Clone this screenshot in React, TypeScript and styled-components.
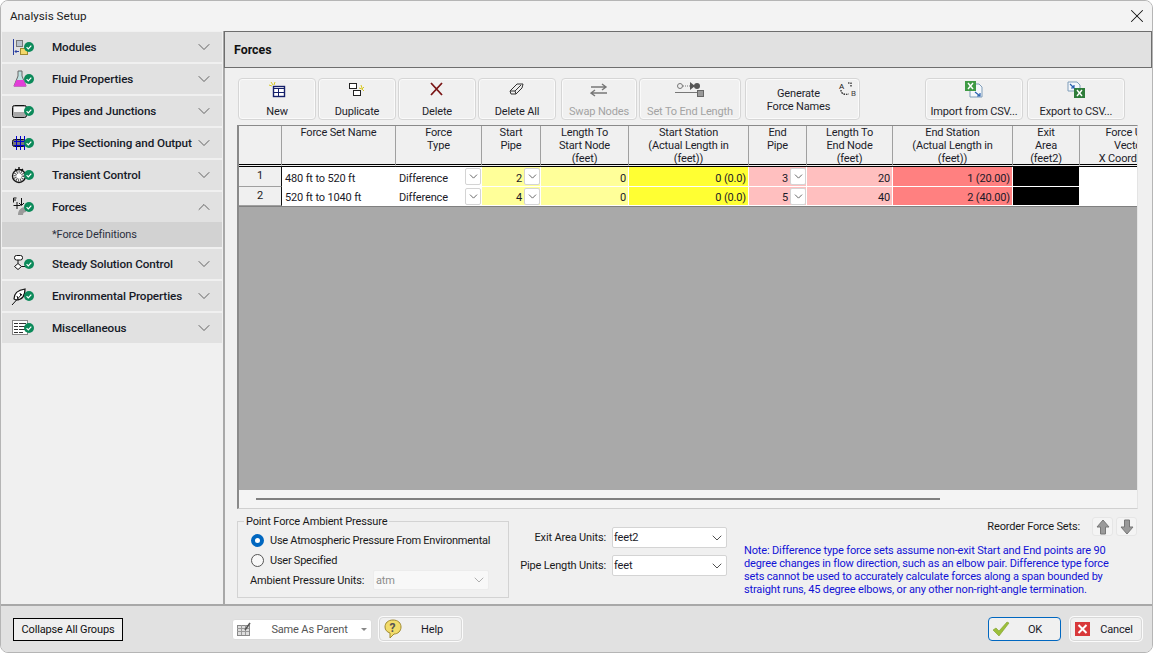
import React from 'react'
import styled, { createGlobalStyle } from 'styled-components'
import { ChevronDown, ChevronUp, X } from 'lucide-react'

const Global = createGlobalStyle`
  html, body { margin: 0; padding: 0; background: #fff; }
  body { font-family: Roboto, "Noto Sans", sans-serif; font-size: 11px; letter-spacing: -0.15px; color: #1a1a1a; }
  * { box-sizing: border-box; }
`

const Win = styled.div`
  width: 1153px;
  height: 653px;
  display: flex;
  flex-direction: column;
  background: #f0f0f0;
  border: 1px solid #b5b5b5;
  border-radius: 8px;
  overflow: hidden;
`
const TitleBar = styled.div`
  height: 30px;
  flex: none;
  display: flex;
  align-items: center;
  justify-content: space-between;
  padding: 0 4px 0 9px;
  background: #f3f3f3;
  font-size: 11.7px;
  letter-spacing: 0;
  color: #222;
`
const Body = styled.div`
  flex: 1;
  display: flex;
  min-height: 0;
`
const Side = styled.div`
  width: 223px;
  flex: none;
  padding: 1px 1px 0 1px;
  display: flex;
  flex-direction: column;
  gap: 2px;
  background: #f0f0f0;
  border-right: 1px solid #a8a8a8;
`
const Group = styled.div`
  display: flex;
  flex-direction: column;
`
const GroupHead = styled.div`
  height: 30px;
  display: flex;
  align-items: center;
  background: #e1e1e1;
  padding-right: 8px;
  font-size: 11.7px;
  letter-spacing: -0.1px;
  font-weight: 500;
  color: #161a28;
`
const IconSlot = styled.div`
  width: 50px;
  flex: none;
  padding-left: 9px;
  display: flex;
`
const HeadLabel = styled.div`
  flex: 1;
  white-space: nowrap;
`
const SubItem = styled.div`
  height: 25px;
  display: flex;
  align-items: center;
  padding-left: 50px;
  background: #d2d2d2;
  color: #2b3040;
`
const Main = styled.div`
  flex: 1;
  display: flex;
  flex-direction: column;
  min-width: 0;
`
const PanelHead = styled.div`
  height: 37px;
  flex: none;
  display: flex;
  align-items: center;
  padding-left: 9px;
  background: #e1e1e1;
  border: 1px solid #6e6e6e;
  font-weight: 700;
  font-size: 12.4px;
  letter-spacing: 0;
  color: #111;
`
const Content = styled.div`
  flex: 1;
  padding: 10px 14px 0 13px;
  border-left: 1px solid #a8a8a8;
  display: flex;
  flex-direction: column;
  min-height: 0;
`
const Toolbar = styled.div`
  height: 42px;
  flex: none;
  display: flex;
`
const ToolBtn = styled.div<{ $w: number; $mr?: number; $off?: boolean }>`
  width: ${p => p.$w}px;
  margin-right: ${p => p.$mr ?? 2}px;
  height: 42px;
  flex: none;
  display: flex;
  flex-direction: column;
  align-items: center;
  justify-content: space-between;
  padding: 2px 0 1px;
  border: 1px solid #d6d6d6;
  border-radius: 4px;
  box-shadow: inset 0 0 0 1px #fafafa;
  color: ${p => (p.$off ? '#a3a3a3' : '#1f1f2b')};
  white-space: nowrap;
  position: relative;
`
const WideLabel = styled.div`
  height: 100%;
  display: flex;
  align-items: center;
  text-align: center;
  line-height: 13px;
  padding: 1px 8px 0 0;
`
const CornerIcon = styled.div`
  position: absolute;
  top: 2px;
  right: 1px;
`
const TableWrap = styled.div`
  margin-top: 5px;
  margin-left: -1px;
  width: 901px;
  height: 384px;
  flex: none;
  display: flex;
  flex-direction: column;
  border-top: 1px solid #8a8a8a;
  border-left: 2px solid #8a8a8a;
  border-bottom: 1px solid #d0d0d0;
  border-right: 1px solid #e4e4e4;
  background: #f2f2f2;
  overflow: hidden;
`
const Grid = styled.div`
  display: grid;
  grid-template-columns: 43px 114px 86px 59px 88px 120px 58px 86px 120px 67px 100px;
  grid-template-rows: 41px 20px 19px;
  width: 941px;
  flex: none;
  background: #a9a9a9;
  border-bottom: 1px solid #808080;
`
const HeadCell = styled.div`
  background: #f0f0f0;
  border-right: 1px solid #a0a0a0;
  border-bottom: 3px double #000;
  text-align: center;
  line-height: 13px;
  color: #1d1d2a;
  white-space: nowrap;
`
const RowHead = styled.div`
  background: #f0f0f0;
  border-right: 1px solid #111;
  border-bottom: 1px solid #a0a0a0;
  text-align: center;
  line-height: 17px;
`
const Cell = styled.div<{ $bg?: string; $right?: boolean }>`
  background: ${p => p.$bg ?? '#fff'};
  border-right: 1px solid #fff;
  border-bottom: 1px solid #fff;
  display: flex;
  align-items: center;
  justify-content: ${p => (p.$right ? 'flex-end' : 'flex-start')};
  padding: 3px ${p => (p.$right ? '2px' : '0')} 0 3px;
  color: #1a1a28;
  white-space: nowrap;
  min-width: 0;
`
const CellText = styled.span`
  flex: 1;
`
const CellGrow = styled.span`
  flex: 1;
  text-align: right;
  padding-right: 2px;
`
const CellDrop = styled.span`
  width: 16px;
  height: 17px;
  flex: none;
  display: flex;
  align-items: center;
  justify-content: center;
  background: #fff;
  border: 1px solid #d4d4d4;
  border-radius: 2px;
  color: #666;
  margin-top: -3px;
`
const Gray = styled.div`
  flex: 1;
  background: #a9a9a9;
  width: 100%;
`
const ScrollZone = styled.div`
  height: 18px;
  flex: none;
  background: #f4f4f4;
  padding: 8px 0 0 17px;
`
const Thumb = styled.div`
  width: 684px;
  height: 2px;
  background: #808080;
`
const Bottom = styled.div`
  flex: 1;
  display: flex;
  min-height: 0;
`
const Fieldset = styled.div`
  width: 272px;
  height: 77px;
  margin-top: 12px;
  margin-left: -1px;
  flex: none;
  border: 1px solid #d3d3d3;
  position: relative;
  padding: 8px 0 0 13px;
  display: flex;
  flex-direction: column;
`
const Legend = styled.div`
  position: absolute;
  top: -7px;
  left: 6px;
  padding: 0 2px;
  background: #f0f0f0;
  line-height: 13px;
  white-space: nowrap;
`
const RadioRow = styled.div`
  display: flex;
  align-items: center;
  height: 20px;
  gap: 6px;
  letter-spacing: -0.25px;
  white-space: nowrap;
`
const Radio = styled.span<{ $on?: boolean }>`
  width: 13px;
  height: 13px;
  border-radius: 50%;
  flex: none;
  background: ${p => (p.$on ? '#fff' : '#f8f8f8')};
  border: ${p => (p.$on ? '4px solid #0067c0' : '1px solid #555')};
`
const AmbientRow = styled.div`
  display: flex;
  align-items: center;
  height: 20px;
  margin-left: -1px;
`
const AmbientLabel = styled.span`
  width: 123px;
  white-space: nowrap;
`
const Select = styled.div<{ $w: number; $off?: boolean }>`
  width: ${p => p.$w}px;
  height: ${p => (p.$off ? 20 : 21)}px;
  flex: none;
  display: flex;
  align-items: center;
  justify-content: space-between;
  padding: 0 1px 0 ${p => (p.$off ? 2 : 1)}px;
  background: ${p => (p.$off ? '#f8f8f8' : '#fff')};
  border: 1px solid ${p => (p.$off ? '#ececec' : '#d4d4d4')};
  border-radius: 2px;
  color: ${p => (p.$off ? '#8d8d8d' : '#1a1a28')};
`
const Units = styled.div`
  width: 218px;
  flex: none;
  padding-top: 18px;
  display: flex;
  flex-direction: column;
  align-items: flex-end;
  gap: 7px;
`
const UnitRow = styled.div`
  display: flex;
  align-items: center;
  gap: 6px;
  white-space: nowrap;
`
const Right = styled.div`
  flex: 1;
  padding-left: 17px;
  display: flex;
  flex-direction: column;
`
const Reorder = styled.div`
  display: flex;
  align-items: center;
  justify-content: flex-end;
  height: 19px;
  margin-top: 8px;
  gap: 12px;
  padding-right: 1px;
  white-space: nowrap;
`
const ArrowPair = styled.div`
  display: flex;
  gap: 3px;
`
const ArrowBtn = styled.div`
  width: 21px;
  height: 19px;
  display: flex;
  align-items: center;
  justify-content: center;
  border: 1px solid #e6e6e6;
  border-radius: 3px;
  background: #f4f4f4;
`
const Note = styled.div`
  margin-top: 8px;
  line-height: 13px;
  color: #1212d6;
  white-space: nowrap;
`
const Footer = styled.div`
  height: 48px;
  flex: none;
  display: flex;
  align-items: center;
  padding: 0 10px 0 12px;
  background: #e1e1e1;
  border-top: 2px solid #a8a8a8;
`
const Collapse = styled.div`
  width: 110px;
  height: 23px;
  display: flex;
  align-items: center;
  justify-content: center;
  border: 1px solid #000;
  background: #efefef;
  color: #111;
`
const Combo = styled.div`
  width: 140px;
  height: 21px;
  margin-left: 109px;
  display: flex;
  align-items: center;
  background: #fff;
  border: 1px solid #dcdcdc;
  border-radius: 3px;
  padding-left: 3px;
  color: #555;
`
const ComboText = styled.span`
  flex: 1;
  text-align: center;
  padding-left: 14px;
`
const ComboArrow = styled.span`
  width: 0;
  height: 0;
  margin: 0 4px 0 8px;
  border-left: 3px solid transparent;
  border-right: 3px solid transparent;
  border-top: 3px solid #888;
`
const FootBtn = styled.div<{ $w: number; $primary?: boolean; $ml?: number }>`
  width: ${p => p.$w}px;
  height: 24px;
  margin-left: ${p => p.$ml ?? 0}px;
  display: flex;
  align-items: center;
  padding-left: 3px;
  border: 1px solid ${p => (p.$primary ? '#0067c0' : '#d8d8d8')};
  border-radius: 4px;
  background: #f0f0f0;
  box-shadow: 0 0 0 1px ${p => (p.$primary ? 'transparent' : '#fbfbfb')};
  color: #1a1a28;
`
const FootLabel = styled.span`
  flex: 1;
  text-align: center;
`
const Spacer = styled.div`
  flex: 1;
`

const Badge = () => (
  <g>
    <circle cx="18" cy="12" r="5" fill="#0c8a5a" />
    <path d="M15.600 12.200l1.700 1.700 3-3.200" fill="none" stroke="#fff" strokeWidth="1.200" />
  </g>
)
const Ico = ({ children }: { children: React.ReactNode }) => (
  <svg width="24" height="24" viewBox="0 0 24 24">
    {children}
    <Badge />
  </svg>
)

const sideIcons: Record<string, React.ReactNode> = {
  modules: (
    <>
      <path d="M2.500 4v16" stroke="#2a3fa0" />
      <rect x="5.500" y="5.500" width="6" height="6" fill="#b9c2cc" stroke="#777" />
      <rect x="9.500" y="13.500" width="7" height="6" fill="#f3d86a" stroke="#a08a30" />
      <path d="M4 16.500h4M5.500 15l-1.500 1.500 1.500 1.500" stroke="#2a3fa0" fill="none" />
    </>
  ),
  fluid: (
    <>
      <path d="M7 4h4v5l4 10H3l4-10z" fill="#bfe0e0" stroke="#666" />
      <path d="M5.500 13h7l3 6.500h-13z" fill="#e23ed8" />
    </>
  ),
  pipes: (
    <>
      <rect x="1.500" y="6.500" width="14" height="12" rx="2" fill="#a8a8a8" stroke="#111" />
      <rect x="3" y="8" width="11" height="5" fill="#f6f6f6" />
    </>
  ),
  section: (
    <>
      <rect x="1.500" y="8.500" width="13" height="7" rx="2" fill="#777" stroke="#111" />
      <path d="M5.500 5v14M9.500 5v14M13.500 5v14M3 10.500h12M3 14.500h12" stroke="#0000d0" />
    </>
  ),
  transient: (
    <>
      <circle cx="8" cy="13" r="6.500" fill="#fff" stroke="#111" strokeWidth="1.400" />
      <circle cx="8" cy="13" r="4" fill="#fff" stroke="#555" strokeWidth="3" strokeDasharray="1 1" />
      <path d="M4 6l2 1.500M8 4v2.500M12 6l-2 1.500" stroke="#111" strokeWidth="1.400" />
    </>
  ),
  forces: (
    <>
      <path d="M7 20c0-5 3-8 8-8v5c-2 0-3 1-3 3z" fill="#9a9a9a" />
      <path d="M2.500 10.500h7M6 7v7M10.500 3v7M8 8l2.500 2.500L13 8M2.500 3h3M2.500 3v4.500M2.500 5h2.500" stroke="#111" fill="none" />
    </>
  ),
  steady: (
    <>
      <rect x="3.500" y="3.500" width="8" height="4.500" rx="2" fill="#fff" stroke="#111" />
      <path d="M7 8v3.500M7 11.500l3.500 3-3.500 3-3.500-3zM10.500 14.500H16V12" fill="#fff" stroke="#111" />
    </>
  ),
  env: (
    <>
      <path d="M3 15c0-6 4-9 11-10 0 7-3 11-9 11z" fill="#fff" stroke="#111" strokeWidth="1.200" />
      <path d="M1 21l10-11M6 12l1 3M9 9l1 3" stroke="#111" />
    </>
  ),
  misc: (
    <>
      <rect x="1.500" y="4.500" width="15" height="14" fill="#fff" stroke="#888" />
      <path d="M3 7.500h4M3 10.500h4M3 13.500h4M3 16.500h4M8 7.500h7M8 10.500h7M8 13.500h7M8 16.500h4" stroke="#333" />
    </>
  ),
}

const groups = [
  { name: 'Modules', icon: 'modules' },
  { name: 'Fluid Properties', icon: 'fluid' },
  { name: 'Pipes and Junctions', icon: 'pipes' },
  { name: 'Pipe Sectioning and Output', icon: 'section' },
  { name: 'Transient Control', icon: 'transient' },
  { name: 'Forces', icon: 'forces', open: true },
  { name: 'Steady Solution Control', icon: 'steady' },
  { name: 'Environmental Properties', icon: 'env' },
  { name: 'Miscellaneous', icon: 'misc' },
]

const headers = [
  [''],
  ['Force Set Name'],
  ['Force', 'Type'],
  ['Start', 'Pipe'],
  ['Length To', 'Start Node', '(feet)'],
  ['Start Station', '(Actual Length in', '(feet))'],
  ['End', 'Pipe'],
  ['Length To', 'End Node', '(feet)'],
  ['End Station', '(Actual Length in', '(feet))'],
  ['Exit', 'Area', '(feet2)'],
  ['Force Unit', 'Vector', 'X Coordinate'],
]

const rows = [
  { n: 1, name: '480 ft to 520 ft', sp: 2, sl: '0', ss: '0 (0.0)', ep: 3, el: '20', es: '1 (20.00)' },
  { n: 2, name: '520 ft to 1040 ft', sp: 4, sl: '0', ss: '0 (0.0)', ep: 5, el: '40', es: '2 (40.00)' },
]

const Drop = () => (
  <CellDrop>
    <ChevronDown size={13} strokeWidth={1.800} />
  </CellDrop>
)

const Chev = () => <ChevronDown size={16} strokeWidth={1.400} color="#444" />

const Excel = ({ flip }: { flip?: boolean }) => (
  <svg width="18" height="17" viewBox="0 0 18 17">
    <path d={flip ? 'M1 1h9l3 3v6H1z' : 'M5 3h9l3 3v10H5z'} fill="#f4f7fb" stroke="#7f9db9" />
    <rect x={flip ? 7 : 0} y={flip ? 7 : 0} width="11" height="10" fill={flip ? '#2f7d3a' : '#3f9a45'} />
    <path d={flip ? 'M10 9l5 6M15 9l-5 6' : 'M3 2l5 6M8 2l-5 6'} stroke="#fff" strokeWidth="1.400" />
    <path d={flip ? 'M3 3l4 4M7 4v3H4' : 'M10 11l5 4M15 12v3h-3'} stroke="#2a62b0" strokeWidth="1.200" fill="none" />
  </svg>
)

const BigArrow = ({ down }: { down?: boolean }) => (
  <svg width="14" height="16" viewBox="0 0 14 16">
    <path
      d={down ? 'M4.500 1h5v7H13l-6 7-6-7h3.500z' : 'M4.500 15h5V8H13L7 1 1 8h3.500z'}
      fill="#9a9a9a"
      stroke="#777"
    />
  </svg>
)

export default function App() {
  return (
    <>
      <Global />
      <Win>
        <TitleBar>
          <span>Analysis Setup</span>
          <X size={22} strokeWidth={1.100} color="#111" />
        </TitleBar>
        <Body>
          <Side>
            {groups.map(g => (
              <Group key={g.name}>
                <GroupHead>
                  <IconSlot>
                    <Ico>{sideIcons[g.icon]}</Ico>
                  </IconSlot>
                  <HeadLabel>{g.name}</HeadLabel>
                  {g.open ? (
                    <ChevronUp size={20} strokeWidth={1.100} color="#555" />
                  ) : (
                    <ChevronDown size={20} strokeWidth={1.100} color="#555" />
                  )}
                </GroupHead>
                {g.open && <SubItem>*Force Definitions</SubItem>}
              </Group>
            ))}
          </Side>
          <Main>
            <PanelHead>Forces</PanelHead>
            <Content>
              <Toolbar>
                <ToolBtn $w={78}>
                  <svg width="18" height="17" viewBox="0 0 18 17">
                    <path d="M3 1l2 3M1 4l3 1M7 1L6 4" stroke="#d8c820" />
                    <rect x="5.500" y="5.500" width="11" height="10" fill="#fff" stroke="#15206a" strokeWidth="1.400" />
                    <path d="M5 7.500h11M10.500 7v8M5 11.500h11" stroke="#15206a" />
                  </svg>
                  <span>New</span>
                </ToolBtn>
                <ToolBtn $w={78}>
                  <svg width="18" height="17" viewBox="0 0 18 17">
                    <rect x="1.500" y="2.500" width="7" height="5" fill="#fff" stroke="#222" />
                    <rect x="5.500" y="9.500" width="7" height="5" fill="#fff" stroke="#222" />
                    <path d="M13 4l1 3M16 6l-2 2M11 7l3 1M16 10l-2-2" stroke="#d8c820" />
                  </svg>
                  <span>Duplicate</span>
                </ToolBtn>
                <ToolBtn $w={78}>
                  <svg width="18" height="17" viewBox="0 0 18 17">
                    <path d="M3 2l11 12M14 2L3 14" stroke="#7a1515" strokeWidth="1.800" />
                  </svg>
                  <span>Delete</span>
                </ToolBtn>
                <ToolBtn $w={78} $mr={5}>
                  <svg width="18" height="17" viewBox="0 0 18 17">
                    <path d="M2 10l7-7h6l-1 4-6 6H3z" fill="#eee" stroke="#333" />
                    <path d="M2 10h5l1 3M7 10l6-6" fill="none" stroke="#333" />
                  </svg>
                  <span>Delete All</span>
                </ToolBtn>
                <ToolBtn $w={76} $off>
                  <svg width="18" height="17" viewBox="0 0 18 17">
                    <path d="M1 6h15M12 3l4 3-4 3M17 12H2M5 9l-4 3 4 3" fill="none" stroke="#777" strokeWidth="1.400" />
                  </svg>
                  <span>Swap Nodes</span>
                </ToolBtn>
                <ToolBtn $w={102} $mr={4} $off>
                  <svg width="32" height="17" viewBox="0 0 32 17">
                    <circle cx="6" cy="5" r="2.500" fill="none" stroke="#777" />
                    <path d="M9 5h8" stroke="#777" strokeDasharray="1 1" />
                    <path d="M1 11.500h22" stroke="#777" />
                    <path d="M16 1l5 4-5 4z" fill="#555" />
                    <circle cx="23" cy="5" r="3" fill="#555" />
                    <rect x="23.500" y="9.500" width="6" height="6" fill="#999" stroke="#666" />
                  </svg>
                  <span>Set To End Length</span>
                </ToolBtn>
                <ToolBtn $w={115} $mr={65}>
                  <WideLabel>
                    Generate
                    <br />
                    Force Names
                  </WideLabel>
                  <CornerIcon>
                    <svg width="20" height="18" viewBox="0 0 20 18">
                      <text x="1" y="8" fontSize="8" fontFamily="Roboto" fill="#111">A</text>
                      <text x="13" y="15" fontSize="8" fontFamily="Roboto" fill="#444">B</text>
                      <path d="M10 2h3v4M3 9c0 3 2 5 8 4" fill="none" stroke="#000" strokeWidth="1.100" strokeDasharray="1.500 1" />
                    </svg>
                  </CornerIcon>
                </ToolBtn>
                <ToolBtn $w={98} $mr={4}>
                  <Excel />
                  <span>Import from CSV...</span>
                </ToolBtn>
                <ToolBtn $w={98}>
                  <Excel flip />
                  <span>Export to CSV...</span>
                </ToolBtn>
              </Toolbar>
              <TableWrap>
                <Grid>
                  {headers.map((h, i) => (
                    <HeadCell key={i}>
                      {h.map(l => (
                        <div key={l}>{l}</div>
                      ))}
                    </HeadCell>
                  ))}
                  {rows.map(r => (
                    <React.Fragment key={r.n}>
                      <RowHead>{r.n}</RowHead>
                      <Cell>{r.name}</Cell>
                      <Cell>
                        <CellText>Difference</CellText>
                        <Drop />
                      </Cell>
                      <Cell $bg="#ffff99">
                        <CellGrow>{r.sp}</CellGrow>
                        <Drop />
                      </Cell>
                      <Cell $bg="#ffff99" $right>{r.sl}</Cell>
                      <Cell $bg="#ffff33" $right>{r.ss}</Cell>
                      <Cell $bg="#ffbfbf">
                        <CellGrow>{r.ep}</CellGrow>
                        <Drop />
                      </Cell>
                      <Cell $bg="#ffbfbf" $right>{r.el}</Cell>
                      <Cell $bg="#ff8080" $right>{r.es}</Cell>
                      <Cell $bg="#000" />
                      <Cell />
                    </React.Fragment>
                  ))}
                </Grid>
                <Gray />
                <ScrollZone>
                  <Thumb />
                </ScrollZone>
              </TableWrap>
              <Bottom>
                <Fieldset>
                  <Legend>Point Force Ambient Pressure</Legend>
                  <RadioRow>
                    <Radio $on />
                    Use Atmospheric Pressure From Environmental
                  </RadioRow>
                  <RadioRow>
                    <Radio />
                    User Specified
                  </RadioRow>
                  <AmbientRow>
                    <AmbientLabel>Ambient Pressure Units:</AmbientLabel>
                    <Select $w={116} $off>
                      atm
                      <ChevronDown size={16} strokeWidth={1.400} color="#aaa" />
                    </Select>
                  </AmbientRow>
                </Fieldset>
                <Units>
                  <UnitRow>
                    Exit Area Units:
                    <Select $w={115}>
                      feet2
                      <Chev />
                    </Select>
                  </UnitRow>
                  <UnitRow>
                    Pipe Length Units:
                    <Select $w={115}>
                      feet
                      <Chev />
                    </Select>
                  </UnitRow>
                </Units>
                <Right>
                  <Reorder>
                    Reorder Force Sets:
                    <ArrowPair>
                      <ArrowBtn>
                        <BigArrow />
                      </ArrowBtn>
                      <ArrowBtn>
                        <BigArrow down />
                      </ArrowBtn>
                    </ArrowPair>
                  </Reorder>
                  <Note>
                    Note: Difference type force sets assume non-exit Start and End points are 90
                    <br />
                    degree changes in flow direction, such as an elbow pair. Difference type force
                    <br />
                    sets cannot be used to accurately calculate forces along a span bounded by
                    <br />
                    straight runs, 45 degree elbows, or any other non-right-angle termination.
                  </Note>
                </Right>
              </Bottom>
            </Content>
          </Main>
        </Body>
        <Footer>
          <Collapse>Collapse All Groups</Collapse>
          <Combo>
            <svg width="16" height="14" viewBox="0 0 16 14">
              <rect x="1.500" y="3.500" width="12" height="10" fill="#ddd" stroke="#888" />
              <path d="M1 6.500h12M5.500 3v10M9.500 3v10M1 9.500h12" stroke="#999" />
              <path d="M9 8l5-7" stroke="#555" strokeWidth="1.500" />
            </svg>
            <ComboText>Same As Parent</ComboText>
            <ComboArrow />
          </Combo>
          <FootBtn $w={83} $ml={7}>
            <svg width="20" height="20" viewBox="0 0 20 20">
              <path d="M10 1c5 0 8 3 8 7s-3 7-7 7l-4 4v-5c-3-1-5-3-5-6 0-4 3-7 8-7z" fill="#f2dc6a" stroke="#a08a30" />
              <text x="6.500" y="13" fontSize="12" fontWeight="700" fontFamily="Roboto" fill="#555">?</text>
            </svg>
            <FootLabel>Help</FootLabel>
          </FootBtn>
          <Spacer />
          <FootBtn $w={73} $primary>
            <svg width="18" height="18" viewBox="0 0 18 18">
              <path d="M1 10l3-2 3 3 8-9 2 1-10 13z" fill="#9cbf3a" stroke="#7f9e2c" strokeWidth=".6" />
            </svg>
            <FootLabel>OK</FootLabel>
          </FootBtn>
          <FootBtn $w={72} $ml={9}>
            <svg width="18" height="18" viewBox="0 0 18 18">
              <rect x="1" y="2" width="15" height="14" fill="#d8383a" />
              <path d="M4.500 5l8 8M12.500 5l-8 8" stroke="#fff" strokeWidth="2" />
            </svg>
            <FootLabel>Cancel</FootLabel>
          </FootBtn>
        </Footer>
      </Win>
    </>
  )
}
